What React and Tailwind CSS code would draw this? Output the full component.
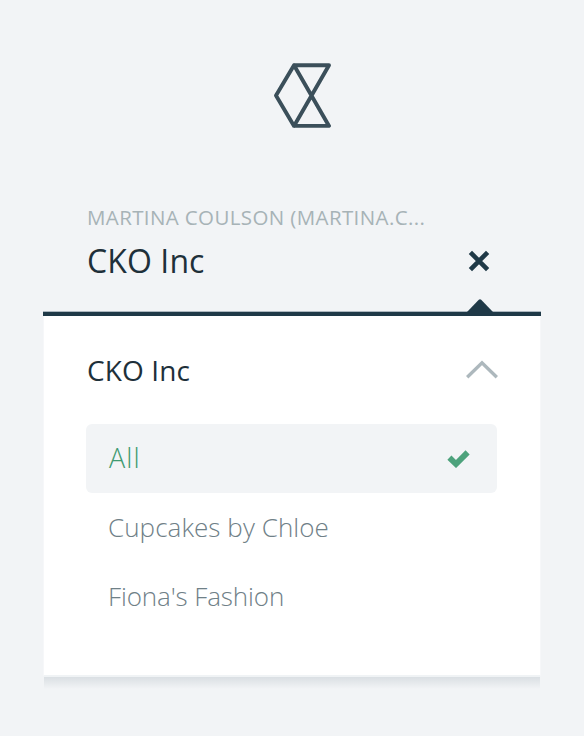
import React from 'react';

function Logo() {
  return (
    <svg className="mx-auto block h-[66px] w-[60px] translate-x-[9.4px]" viewBox="0 0 60 66" fill="none" stroke="#3b4f5a" strokeWidth="3.9" strokeLinejoin="round">
      <path d="M22.6 3.3H57.6L22.6 63.9L4.6 33.5L22.6 3.3L57.6 63.9H22.6" strokeLinecap="round" />
    </svg>
  );
}

function Entry({ label, className }) {
  return (
    <li className="flex h-[69px] items-center pl-[22px] text-[26px] font-light text-[#6f8087]">
      <span className={className}>{label}</span>
    </li>
  );
}

export default function App() {
  return (
    <div className="h-[736px] w-[584px] overflow-hidden bg-[#f2f4f6] pt-[62px] font-['Open_Sans','Noto_Sans',sans-serif] whitespace-nowrap">
      <Logo />
      <header className="mx-[43px] mt-[76px] h-[107px] pr-[42px] pl-[44px]">
        <p className="h-[28px] text-[20.5px] leading-[27px] tracking-[0.38px] text-[#a7b3b7]">MARTINA COULSON (MARTINA.C...</p>
        <div className="flex h-[58px] items-center justify-between">
          <h1 className="text-[32px] leading-[40px] tracking-[0.1px] text-[#1e303a]">CKO Inc</h1>
          <svg className="mr-[9px] block h-[22px] w-[22px]" viewBox="0 0 22 22" stroke="#1f3947" strokeWidth="4.6">
            <path d="M2.4 2.4L19.6 19.6M19.6 2.4L2.4 19.6" />
          </svg>
        </div>
        <div className="flex justify-end pr-[6px]">
          <svg className="mt-[9px] block h-[13px] w-[26px]" viewBox="0 0 26 13">
            <path d="M0 13L11.8 0.8Q13 -0.2 14.2 0.8L26 13Z" fill="#1f3947" />
          </svg>
        </div>
      </header>
      <main className="ml-[43px] w-[498px]">
        <div className="h-[5px] border-t border-[#acb7bf] bg-[#1f3947]" />
        <div className="h-[361px] border-x border-b-2 border-x-[#f6f7f9] border-b-[#f0f3f5] bg-white pr-[43px] pl-[42px]">
          <div className="flex h-[108px] items-center justify-between pl-px">
            <h2 className="text-[28px] tracking-[0.1px] text-[#1e303a]">CKO Inc</h2>
            <svg className="-mt-[2px] -mr-px block h-[19px] w-[32px]" viewBox="0 0 32 19" fill="none" stroke="#adb8bd" strokeWidth="3.4">
              <path d="M1.2 17.2L16 2.8L30.8 17.2" />
            </svg>
          </div>
          <ul>
            <li className="flex h-[69px] items-center justify-between rounded-[6px] bg-[#f2f4f6] pr-[27px] pl-[23px] text-[27px] font-light text-[#3f9a71]">
              <span className="tracking-[1.1px]">All</span>
              <svg className="block h-[18px] w-[23px]" viewBox="0 0 23 18" fill="none" stroke="#4da27c" strokeWidth="5.8">
                <path d="M2.4 7.6L9 14L20.6 2.4" />
              </svg>
            </li>
            <Entry label="Cupcakes by Chloe" className="tracking-[0.06px]" />
            <Entry label="Fiona's Fashion" className="tracking-[-0.12px]" />
          </ul>
        </div>
        <div className="mx-px h-[12px] bg-linear-to-b from-[#dadfe3] to-[#f2f4f6]" />
      </main>
    </div>
  );
}
